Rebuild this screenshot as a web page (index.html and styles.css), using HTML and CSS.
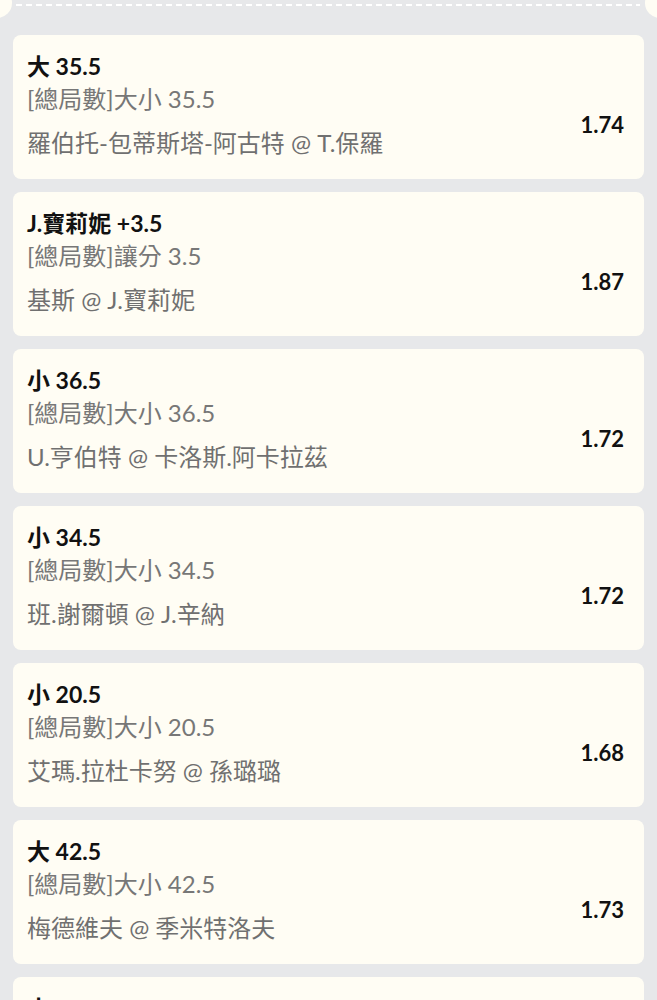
FILE: index.html
```html
<!DOCTYPE html>
<html lang="zh-Hant">
<head>
<meta charset="utf-8">
<title>注單</title>
<link rel="stylesheet" href="styles.css">
</head>
<body>
<div class="page">
  <div class="tear">
    <span class="notch notch-left"></span>
    <div class="dash"></div>
    <span class="notch notch-right"></span>
  </div>
  <div class="list">
    <div class="card">
      <div class="title">大 35.5</div>
      <div class="market">[總局數]大小 35.5</div>
      <div class="match">羅伯托-包蒂斯塔-阿古特 @ T.保羅</div>
      <div class="odds">1.74</div>
    </div>
    <div class="card">
      <div class="title">J.寶莉妮 +3.5</div>
      <div class="market">[總局數]讓分 3.5</div>
      <div class="match">基斯 @ J.寶莉妮</div>
      <div class="odds">1.87</div>
    </div>
    <div class="card">
      <div class="title">小 36.5</div>
      <div class="market">[總局數]大小 36.5</div>
      <div class="match">U.亨伯特 @ 卡洛斯.阿卡拉茲</div>
      <div class="odds">1.72</div>
    </div>
    <div class="card">
      <div class="title">小 34.5</div>
      <div class="market">[總局數]大小 34.5</div>
      <div class="match">班.謝爾頓 @ J.辛納</div>
      <div class="odds">1.72</div>
    </div>
    <div class="card">
      <div class="title">小 20.5</div>
      <div class="market">[總局數]大小 20.5</div>
      <div class="match">艾瑪.拉杜卡努 @ 孫璐璐</div>
      <div class="odds">1.68</div>
    </div>
    <div class="card">
      <div class="title">大 42.5</div>
      <div class="market">[總局數]大小 42.5</div>
      <div class="match">梅德維夫 @ 季米特洛夫</div>
      <div class="odds">1.73</div>
    </div>
    <div class="card">
      <div class="title">小 22.5</div>
      <div class="market">[總局數]大小 22.5</div>
      <div class="match">納達爾 @ 費德勒</div>
      <div class="odds">1.80</div>
    </div>
  </div>
</div>
</body>
</html>
```
FILE: styles.css
```css
* { box-sizing: border-box; }
html, body {
  margin: 0;
  padding: 0;
  background: #e7e8ea;
  overflow: hidden;
}
body {
  font-family: "Lato", "Noto Sans CJK TC", sans-serif;
  color: #111;
}
.page {
  padding: 0 13px;
  height: 1000px;
  overflow: hidden;
}
.tear {
  position: relative;
  height: 22px;
  padding-top: 4px;
}
.dash {
  height: 2px;
  margin: 0 4px 0 3px;
  background: repeating-linear-gradient(90deg, #ffffff 0 6px, transparent 6px 10px);
}
.notch {
  position: absolute;
  top: -12px;
  width: 30px;
  height: 30px;
  border-radius: 50%;
  background: #fffdf4;
}
.notch-left { left: -31px; }
.notch-right { right: -31px; }
.list {
  display: flex;
  flex-direction: column;
  gap: 13px;
  padding-top: 13px;
}
.card {
  background: #fffdf4;
  border-radius: 8px;
  padding: 17px 20px 16px 14px;
  display: grid;
  grid-template-columns: 1fr auto;
  grid-template-rows: 28px 38px 45px;
  flex-shrink: 0;
}
.title {
  grid-column: 1;
  grid-row: 1;
  font-size: 23px;
  line-height: 28px;
  font-weight: 700;
  color: #111;
  white-space: nowrap;
}
.market {
  grid-column: 1;
  grid-row: 2;
  font-size: 24px;
  line-height: 38px;
  color: #777777;
  white-space: nowrap;
}
.match {
  grid-column: 1;
  grid-row: 3;
  align-self: end;
  margin-bottom: 1px;
  font-size: 24px;
  line-height: 38px;
  color: #707070;
  white-space: nowrap;
}
.odds {
  grid-column: 2;
  grid-row: 2 / 4;
  align-self: center;
  margin-top: 6px;
  font-size: 22px;
  font-weight: 700;
  color: #111;
}
```
